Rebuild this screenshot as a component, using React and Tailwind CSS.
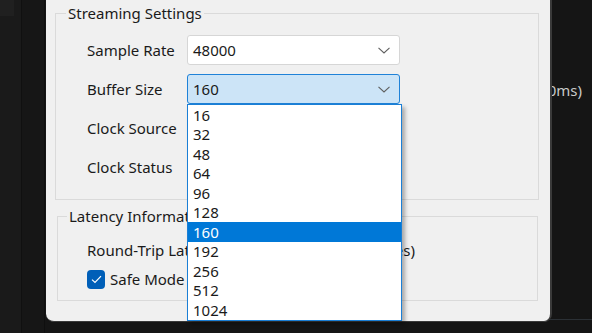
import React from 'react'

const font = { fontFamily: '"Noto Sans", "Open Sans", sans-serif' }

const sizes = ['16', '32', '48', '64', '96', '128', '160', '192', '256', '512', '1024']

function Chevron() {
  return (
    <svg width="12" height="7" viewBox="0 0 12 7" className="shrink-0">
      <path d="M0.5 0.8 L6 6 L11.5 0.8" fill="none" stroke="#5f5f5f" strokeWidth="1.1" />
    </svg>
  )
}

function Combo({ value, active }) {
  return (
    <div
      className={
        'w-[213px] h-[30px] flex items-center justify-between pl-[5px] pr-[9px] rounded-[3px] border ' +
        (active ? 'bg-[#cce4f7] border-[#1f82d8]' : 'bg-white border-[#d6d6d6]')
      }
    >
      <span>{value}</span>
      <Chevron />
    </div>
  )
}

function Row({ label, children }) {
  return (
    <div className="flex items-center h-[30px]">
      <span className="w-[100px] shrink-0">{label}</span>
      {children}
    </div>
  )
}

export default function App() {
  return (
    <div className="relative w-[592px] h-[333px] bg-[#151515] overflow-hidden text-[15px] text-[#1a1a1a]" style={font}>
      {/* background window behind the dialog */}
      <div className="flex h-full">
        <div className="w-[22px] h-full bg-[#1a1a1a] border-r border-[#101010]">
          <div className="w-[14px] h-[16px] bg-[#202020]" />
        </div>
        <div className="w-[23px] h-full bg-[#161616] border-r border-[#0f0f0f]" />
        <div className="flex-1 flex flex-col">
          <div className="h-[80px]" />
          <div className="h-[20px] flex items-center justify-end pr-[10px] text-[#c9c9c9] leading-[20px]">
            Buffer: 160 samples (10ms)
          </div>
          <div className="flex-1" />
          <div className="h-[14px] border-t border-[#2b3035] ml-[504px]" />
        </div>
      </div>

      {/* dialog */}
      <div className="absolute left-[46px] top-0 w-[506px] h-[322px] bg-[#f0f0f0] rounded-b-[8px] border-r-2 border-b border-[#3a3a3a] pl-[9px] pr-[11px]">
        <fieldset className="mt-[3px] h-[197px] border border-[#dadada]">
          <legend className="ml-[10px] px-[2px] leading-[20px]">Streaming Settings</legend>
          <div className="pl-[31px] pt-[12px] flex flex-col gap-[9px]">
            <Row label="Sample Rate">
              <Combo value="48000" />
            </Row>
            <Row label="Buffer Size">
              <Combo value="160" active />
            </Row>
            <Row label="Clock Source">
              <Combo value="Internal" />
            </Row>
            <Row label="Clock Status">
              <div className="w-[213px] h-[30px] border border-[#c8c8c8] bg-[#f7f7f7]" />
            </Row>
          </div>
        </fieldset>

        <fieldset className="mt-[6px] ml-[2px] mr-[1px] h-[95px] border border-[#dadada]">
          <legend className="ml-[9px] px-[2px] leading-[20px]">Latency Information</legend>
          <div className="pl-[29px] pt-[14px] flex flex-col gap-[9px]">
            <div className="w-[328px] h-[20px] flex items-center justify-between whitespace-nowrap">
              <span>Round-Trip Latency:</span>
              <span>6.67 ms (320 samples)</span>
            </div>
            <div className="h-[20px] flex items-center gap-[5px]">
              <div className="w-[18px] h-[19px] rounded-[4px] bg-[#005fb8] flex items-center justify-center">
                <svg width="11" height="9" viewBox="0 0 11 9">
                  <path d="M1 4.6 L4 7.4 L10 1.2" fill="none" stroke="#ffffff" strokeWidth="1.2" />
                </svg>
              </div>
              <span>Safe Mode</span>
            </div>
          </div>
        </fieldset>

        {/* open dropdown list */}
        <div className="absolute left-[141px] top-[104px] w-[215px] h-[217px] bg-white border border-[#1a7fd6] shadow-[3px_3px_4px_rgba(0,0,0,0.3)]">
          {sizes.map((s) => (
            <div
              key={s}
              className={
                'h-[19.5px] flex items-center pl-[5px] pt-[1px] leading-none ' +
                (s === '160' ? 'bg-[#0078d7] text-white' : '')
              }
            >
              {s}
            </div>
          ))}
        </div>
      </div>
    </div>
  )
}
